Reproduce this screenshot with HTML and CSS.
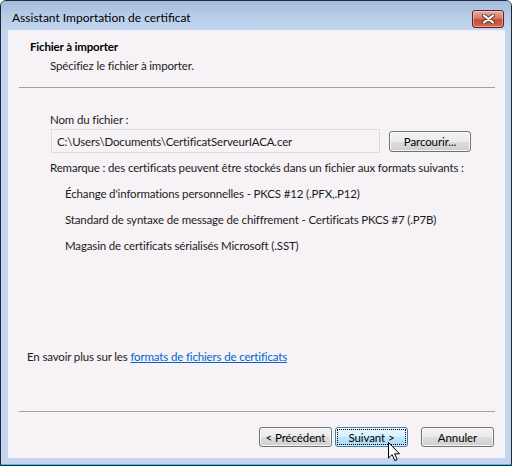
FILE: index.html
```html
<!DOCTYPE html>
<html lang="fr">
<head>
  <meta charset="UTF-8" />
  <title>Assistant Importation de certificat</title>
  <link rel="stylesheet" href="styles.css">
</head>
<body>

  <div class="window">
    <div class="titlebar">
      <span class="title">Assistant Importation de certificat</span>
      <button class="close-btn" type="button">
        <svg width="13" height="10" viewBox="0 0 13 10">
          <path d="M2 1.5 L11 8.5 M11 1.5 L2 8.5" stroke="#5b3b3b" stroke-width="4" stroke-linecap="round"/>
          <path d="M2 1.5 L11 8.5 M11 1.5 L2 8.5" stroke="#ffffff" stroke-width="2.2" stroke-linecap="round"/>
        </svg>
      </button>
    </div>

    <div class="client">
      <div class="header">
        <div class="header-title">Fichier à importer</div>
        <div class="header-sub">Spécifiez le fichier à importer.</div>
      </div>
      <hr class="sep">

      <div class="content">
        <div class="field-label">Nom du fichier :</div>
        <div class="file-row">
          <input class="file-input" type="text" value="C:\Users\Documents\CertificatServeurIACA.cer">
          <button class="btn btn-browse" type="button">Parcourir...</button>
        </div>
        <p class="note">Remarque : des certificats peuvent être stockés dans un fichier aux formats suivants :</p>
        <ul class="formats">
          <li>Échange d'informations personnelles - PKCS #12 (.PFX,.P12)</li>
          <li>Standard de syntaxe de message de chiffrement - Certificats PKCS #7 (.P7B)</li>
          <li>Magasin de certificats sérialisés Microsoft (.SST)</li>
        </ul>
      </div>

      <div class="bottom">
        <p class="more">En savoir plus sur les <a href="#">formats de fichiers de certificats</a></p>
        <hr class="sep">
        <div class="actions">
          <button class="btn" type="button">&lt; Précédent</button>
          <button class="btn btn-default" type="button"><span class="focus-ring">Suivant &gt;</span></button>
          <button class="btn btn-cancel" type="button">Annuler</button>
        </div>
      </div>
    </div>

    <!-- mouse pointer over the Suivant button -->
    <svg class="cursor" width="13" height="20" viewBox="0 0 13 20">
      <path d="M0.5 0.5 L0.5 16 L4.2 12.6 L6.8 18.6 L9.2 17.6 L6.7 11.8 L11.5 11.8 Z" fill="#ffffff" stroke="#000000" stroke-width="1" stroke-linejoin="miter"/>
    </svg>
  </div>

</body>
</html>
```

FILE: styles.css
```css
body {
  margin: 0;
  background-color: #ffffff;
  font-family: Lato, "Open Sans", sans-serif;
  font-size: 11.5px;
  letter-spacing: -0.15px;
  color: #1b1b1b;
}
.window {
  position: relative;
  width: 512px;
  height: 466px;
  box-sizing: border-box;
  display: flex;
  flex-direction: column;
  border: 1px solid #202a36;
  border-radius: 6px 6px 0 0;
  background-color: #c1d5ee;
  box-shadow: inset 0 -1px 0 #3cc6e6;
  padding: 0 6px 7px 7px;
}
.titlebar {
  height: 29px;
  box-sizing: border-box;
  display: flex;
  justify-content: space-between;
  align-items: flex-start;
  padding: 8px 7px 0 11px;
  margin: 0 -6px 0 -7px;
  border-radius: 5px 5px 0 0;
  background: linear-gradient(#a2bcdb, #b9cee9 55%, #c1d5ee);
}
.title {
  font-size: 12px;
  letter-spacing: 0;
  line-height: 18px;
  color: #000000;
}
.close-btn {
  width: 32px;
  height: 18px;
  padding: 0;
  margin-top: 1px;
  display: flex;
  align-items: center;
  justify-content: center;
  border: 1px solid #5e1f2c;
  border-radius: 3px;
  background: linear-gradient(#eab0a2, #d77966 45%, #c74a2f 55%, #d46a4c);
  box-shadow: inset 0 0 0 1px rgba(255, 220, 210, 0.5);
}
.client {
  flex: 1;
  display: flex;
  flex-direction: column;
  background-color: #f6f2f6;
  padding-bottom: 11px;
}
.header {
  padding-top: 9px;
}
.header-title {
  padding-left: 22px;
  font-weight: bold;
  line-height: 16px;
  color: #000000;
}
.header-sub {
  padding-left: 42px;
  margin-top: 3px;
  line-height: 16px;
}
.sep {
  margin: 13px 10px 0 11px;
  border: none;
  border-top: 1px solid #a0a0a0;
  height: 0;
}
.content {
  padding-left: 42px;
}
.field-label {
  margin-top: 24px;
  line-height: 16px;
}
.file-row {
  display: flex;
  align-items: center;
  margin-top: 1px;
}
.file-input {
  width: 329px;
  height: 24px;
  box-sizing: border-box;
  margin: 0 0 0 1px;
  padding: 0 5px;
  border: 1px solid #dedade;
  background-color: transparent;
  font-family: inherit;
  font-size: 11.5px;
  letter-spacing: -0.15px;
  color: #1b1b1b;
}
.btn {
  height: 21px;
  box-sizing: border-box;
  padding: 0;
  font-family: inherit;
  font-size: 11.5px;
  letter-spacing: -0.1px;
  color: #000000;
  border: 1px solid #707070;
  border-radius: 3px;
  background: linear-gradient(#f2f2f2, #ebebeb 50%, #dddddd 51%, #cfcfcf);
  box-shadow: inset 0 0 0 1px rgba(255, 255, 255, 0.8);
}
.btn-browse {
  width: 82px;
  margin-left: 9px;
}
.note {
  margin: 7px 0 0;
  line-height: 16px;
}
.formats {
  list-style: none;
  margin: 7px 0 0;
  padding-left: 15px;
}
.formats li {
  margin-top: 10px;
  line-height: 16px;
}
.bottom {
  margin-top: auto;
}
.more {
  margin: 0 0 0 19px;
  line-height: 16px;
}
.more a {
  color: #0066cc;
}
.bottom .sep {
  margin-top: 46px;
}
.actions {
  display: flex;
  justify-content: flex-end;
  margin-top: 15px;
  padding-right: 11px;
}
.actions .btn {
  width: 73px;
  height: 20px;
}
.actions .btn + .btn {
  margin-left: 3px;
}
.actions .btn + .btn-cancel {
  margin-left: 13px;
}
.btn-default {
  display: flex;
  padding: 1px;
  border-color: #3c7fb1;
  background: linear-gradient(#eaf6fd, #d9f0fc 50%, #bee6fd 51%, #a7d9f5);
  box-shadow: inset 0 0 0 1px rgba(255, 255, 255, 0.5);
}
.focus-ring {
  flex: 1;
  display: flex;
  align-items: center;
  justify-content: center;
  border: 1px dotted #000000;
}
.cursor {
  position: absolute;
  left: 387px;
  top: 441px;
}
```
